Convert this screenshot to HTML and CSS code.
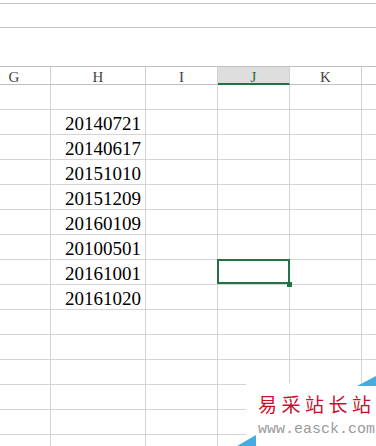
FILE: index.html
```html
<!DOCTYPE html>
<html lang="zh">
<head>
<meta charset="utf-8">
<title>Sheet</title>
<link rel="stylesheet" href="styles.css">
</head>
<body>
<div class="top"><div class="bar"></div></div>
<div class="sheet">
  <div class="row head">
    <div class="c g">G</div><div class="c">H</div><div class="c">I</div><div class="c sel-head">J</div><div class="c">K</div><div class="c"></div>
  </div>
  <div class="row"><div class="c"></div><div class="c"></div><div class="c"></div><div class="c"></div><div class="c"></div><div class="c"></div></div>
  <div class="row"><div class="c"></div><div class="c num">20140721</div><div class="c"></div><div class="c"></div><div class="c"></div><div class="c"></div></div>
  <div class="row"><div class="c"></div><div class="c num">20140617</div><div class="c"></div><div class="c"></div><div class="c"></div><div class="c"></div></div>
  <div class="row"><div class="c"></div><div class="c num">20151010</div><div class="c"></div><div class="c"></div><div class="c"></div><div class="c"></div></div>
  <div class="row"><div class="c"></div><div class="c num">20151209</div><div class="c"></div><div class="c"></div><div class="c"></div><div class="c"></div></div>
  <div class="row"><div class="c"></div><div class="c num">20160109</div><div class="c"></div><div class="c"></div><div class="c"></div><div class="c"></div></div>
  <div class="row"><div class="c"></div><div class="c num">20100501</div><div class="c"></div><div class="c"></div><div class="c"></div><div class="c"></div></div>
  <div class="row"><div class="c"></div><div class="c num">20161001</div><div class="c"></div><div class="c active"><span class="handle"></span></div><div class="c"></div><div class="c"></div></div>
  <div class="row"><div class="c"></div><div class="c num">20161020</div><div class="c"></div><div class="c"></div><div class="c"></div><div class="c"></div></div>
  <div class="row"><div class="c"></div><div class="c"></div><div class="c"></div><div class="c"></div><div class="c"></div><div class="c"></div></div>
  <div class="row"><div class="c"></div><div class="c"></div><div class="c"></div><div class="c"></div><div class="c"></div><div class="c"></div></div>
  <div class="row"><div class="c"></div><div class="c"></div><div class="c"></div><div class="c"></div><div class="c"></div><div class="c"></div></div>
  <div class="row"><div class="c"></div><div class="c"></div><div class="c"></div><div class="c"></div><div class="c"></div><div class="c"></div></div>
  <div class="row"><div class="c"></div><div class="c"></div><div class="c"></div><div class="c"></div><div class="c"></div><div class="c"></div></div>
  <div class="row last"><div class="c"></div><div class="c"></div><div class="c"></div><div class="c"></div><div class="c"></div><div class="c"></div></div>
</div>
<div class="watermark">
  <svg class="wm-bg" width="142" height="72" viewBox="0 0 142 72">
    <rect x="12" y="9" width="130" height="63" fill="#ffffff"/>
    <polygon points="123,12 142,2 142,12" fill="#45ace2"/>
    <polygon points="3,72 22,61 22,72" fill="#45ace2"/>
  </svg>
  <div class="wm-title">易采站长站</div>
  <div class="wm-url">www.easck.com</div>
</div>
</body>
</html>
```
FILE: styles.css
```css
html, body {
  margin: 0;
  padding: 0;
  overflow: hidden;
  background: #ffffff;
}
body {
  position: relative;
  width: 376px;
  height: 446px;
}
.top {
  height: 66px;
  box-sizing: border-box;
  padding-top: 3px;
}
.bar {
  height: 25px;
  box-sizing: border-box;
  border-top: 1px solid #c4c4c4;
  border-bottom: 1px solid #c4c4c4;
}
.sheet {
  border-top: 1px solid #c0c0c0;
  width: 376px;
  height: 379px;
  overflow: hidden;
}
.row {
  display: grid;
  grid-template-columns: 51px 95px 72px 72px 72px 14px;
}
.c {
  box-sizing: border-box;
  height: 25px;
  border-right: 1px solid #d4d4d4;
  border-bottom: 1px solid #d4d4d4;
}
.row .c:last-child {
  border-right: none;
}
.last .c {
  height: 12px;
  border-bottom: none;
}
.head .c {
  height: 18px;
  border-bottom-color: #c0c0c0;
  border-right-color: #d0d0d0;
  font-family: "Liberation Serif", serif;
  font-size: 15px;
  line-height: 15px;
  padding-top: 3px;
  text-align: center;
  color: #444444;
}
.head .g {
  padding-right: 22px;
}
.head .sel-head {
  background: #dedede;
  color: #2b6a48;
  border-bottom: 2px solid #217346;
}
.num {
  font-family: "Liberation Serif", serif;
  font-size: 19px;
  line-height: 22px;
  padding-top: 3px;
  padding-right: 4px;
  text-align: right;
  color: #000000;
}
.active {
  position: relative;
}
.active::after {
  content: "";
  position: absolute;
  left: -1px;
  right: -1px;
  top: -1px;
  bottom: 0;
  border: 2px solid #217346;
}
.handle {
  position: absolute;
  right: -3px;
  bottom: -3px;
  width: 5px;
  height: 5px;
  background: #217346;
  z-index: 2;
}
.watermark {
  position: absolute;
  left: 234px;
  top: 374px;
  width: 142px;
  height: 72px;
  box-sizing: border-box;
  padding: 20px 0 0 24px;
  display: flex;
  flex-direction: column;
  overflow: hidden;
}
.wm-bg {
  position: absolute;
  left: 0;
  top: 0;
}
.wm-title {
  position: relative;
  font-family: "Noto Sans CJK SC", sans-serif;
  font-size: 19px;
  line-height: 19px;
  letter-spacing: 4.5px;
  color: #c8102e;
  white-space: nowrap;
}
.wm-url {
  position: relative;
  margin-top: 5px;
  font-family: "Liberation Mono", monospace;
  font-size: 15px;
  line-height: 24px;
  color: #9a9a9a;
  white-space: nowrap;
}
```
